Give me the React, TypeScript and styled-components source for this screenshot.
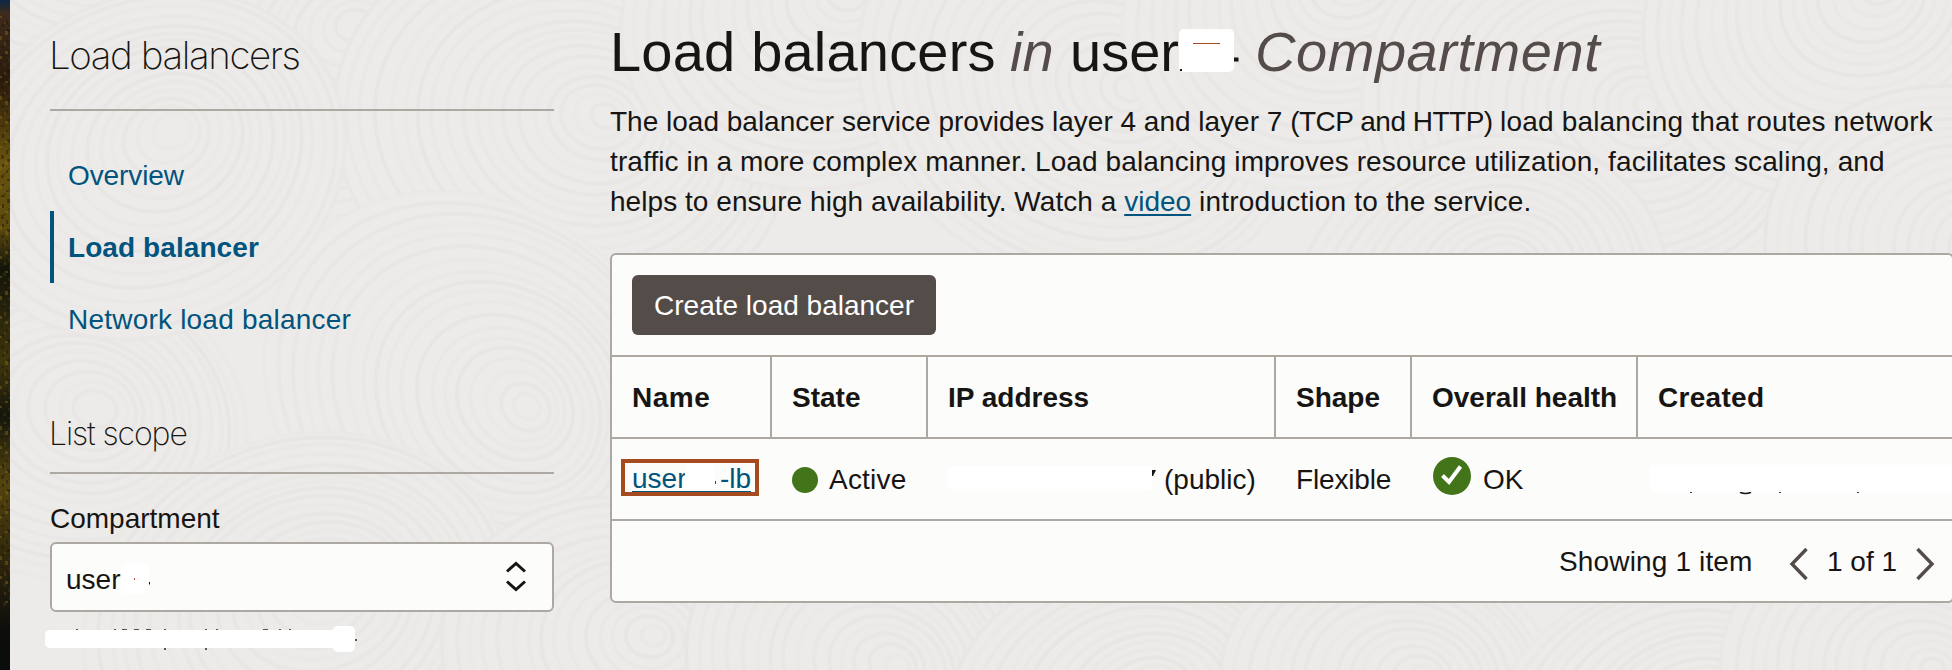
import React from "react";
import styled, { createGlobalStyle } from "styled-components";

const ink = "#161513";
const rule = "#aea8a2";
const link = "#00547d";
const paper = "#fcfcfa";
const brown = "#544c49";
const green = "#427519";

const GlobalStyle = createGlobalStyle`
  * { box-sizing: border-box; }
  html, body { margin: 0; background: #edebe9; overflow: hidden; }
  body {
    color: ${ink};
    font-family: "Liberation Sans", Arial, sans-serif;
    font-size: 28px;
    line-height: 40px;
  }
`;

const Page = styled.div`
  position: relative;
  display: flex;
  width: 1952px;
  height: 670px;
  overflow: hidden;
`;

const Texture = styled.svg`
  position: absolute;
  inset: 0;
`;

const Photo = styled.svg`
  position: relative;
  flex: none;
`;

const Sidebar = styled.aside`
  position: relative;
  flex: none;
  width: 600px;
  padding: 29px 56px 0 40px;
`;

const SideTitle = styled.h2<{ $size: number; $spacing: number; $gap: number }>`
  margin: 0;
  padding-bottom: ${(p) => p.$gap}px;
  border-bottom: 2px solid ${rule};
  font-family: Inter, "Liberation Sans", sans-serif;
  font-weight: 200;
  font-size: ${(p) => p.$size}px;
  line-height: 52px;
  letter-spacing: ${(p) => p.$spacing}px;
  text-indent: -1px;
`;

const Nav = styled.nav`
  display: flex;
  flex-direction: column;
  margin: 28px 0 53px;
`;

const NavItem = styled.a<{ $active?: boolean; $spacing: number }>`
  height: 72px;
  padding-left: 14px;
  border-left: 4px solid ${(p) => (p.$active ? link : "transparent")};
  color: ${link};
  font-weight: ${(p) => (p.$active ? 700 : 400)};
  letter-spacing: ${(p) => p.$spacing}px;
  line-height: 74px;
`;

const Label = styled.label`
  display: block;
  margin-top: 25px;
  line-height: 40px;
`;

const Select = styled.div`
  position: relative;
  display: flex;
  align-items: center;
  justify-content: space-between;
  height: 70px;
  margin-top: 3px;
  padding: 3px 25px 0 14px;
  border: 2px solid ${rule};
  border-radius: 6px;
  background: ${paper};
`;

const SelectValue = styled.span`
  padding-top: 2px;
`;

const SelectArrows = styled.svg`
  margin-bottom: 5px;
`;

const Mask = styled.span<{ $x: number; $y: number; $w: number; $h: number }>`
  position: absolute;
  left: ${(p) => p.$x}px;
  top: ${(p) => p.$y}px;
  width: ${(p) => p.$w}px;
  height: ${(p) => p.$h}px;
  border-radius: 5px;
  background: #fff;
`;

const Marks = styled.svg<{ $x: number; $y: number }>`
  position: absolute;
  left: ${(p) => p.$x}px;
  top: ${(p) => p.$y}px;
`;

const Hint = styled.div`
  position: relative;
  height: 40px;
`;

const Main = styled.main`
  position: relative;
  flex: none;
  width: 1344px;
  padding-top: 20px;
`;

const Heading = styled.h1`
  position: relative;
  display: flex;
  margin: 0;
  font-size: 56px;
  font-weight: 400;
  line-height: 64px;
  white-space: nowrap;

  em { color: ${brown}; }
`;

const Word = styled.span<{ $w: number; $spacing?: number }>`
  width: ${(p) => p.$w}px;
  letter-spacing: ${(p) => p.$spacing ?? 0}px;
`;

const Intro = styled.p`
  margin: 18px 0 31px;
  white-space: nowrap;
`;

const Line = styled.span`
  display: block;
`;

const Tracked = styled.span<{ $spacing: number }>`
  letter-spacing: ${(p) => p.$spacing}px;
`;

const Link = styled.a`
  color: ${link};
  text-decoration: underline;
  text-decoration-thickness: 2px;
  text-underline-offset: 3px;
`;

const Panel = styled.section`
  border: 2px solid ${rule};
  border-radius: 6px;
  background: ${paper};
`;

const Toolbar = styled.div`
  display: flex;
  padding: 20px;
  border-bottom: 2px solid ${rule};
`;

const Button = styled.button`
  width: 304px;
  height: 60px;
  padding: 2px 0 0;
  border: 0;
  border-radius: 6px;
  background: ${brown};
  color: #fff;
  font: inherit;
`;

const Row = styled.div`
  display: grid;
  grid-template-columns: 160px 156px 348px 136px 226px 1fr;
  height: 82px;
  border-bottom: 2px solid ${rule};
  white-space: nowrap;
`;

const HeadCell = styled.div<{ $spacing?: number }>`
  padding-left: 20px;
  border-right: 2px solid ${rule};
  font-weight: 700;
  letter-spacing: ${(p) => p.$spacing ?? 0}px;
  line-height: 82px;
  height: 80px;

  &:last-child { border-right: 0; }
`;

const Cell = styled.div`
  position: relative;
  display: flex;
  align-items: center;
  height: 80px;
  padding: 2px 0 0 20px;
`;

const Dot = styled.span`
  width: 26px;
  height: 26px;
  margin-right: 11px;
  border-radius: 50%;
  background: ${green};
`;

const NameLink = styled.a`
  display: flex;
  justify-content: space-between;
  width: 119px;
  height: 32px;
  margin-top: -6px;
  border-bottom: 2px solid ${link};
  color: ${link};
  line-height: 36px;
`;

const Highlight = styled.span`
  position: absolute;
  left: 9px;
  top: 20px;
  width: 138px;
  height: 37px;
  border: 4px solid #a64a20;
`;

const Health = styled.svg`
  margin: -8px 12px 0 1px;
`;

const Address = styled.span`
  margin-left: 216px;
`;

const Footer = styled.div`
  display: flex;
  align-items: center;
  justify-content: flex-end;
  height: 80px;
  padding-right: 17px;
`;

const Count = styled.span<{ $w: number; $spacing?: number }>`
  width: ${(p) => p.$w}px;
  padding-top: 2px;
  letter-spacing: ${(p) => p.$spacing ?? 0}px;
  white-space: nowrap;
`;

const Chevron = styled.svg<{ $gap: number }>`
  margin: 6px ${(p) => p.$gap}px 0 0;
`;

/* Wood-grain swirls: each disc hides the ones below it and carries its own drifting rings. */
const swirls: [number, number, number, number][] = [
  [60, -60, 190, 20], [330, 60, 210, -25], [560, 130, 230, 15], [820, 20, 200, -10],
  [1080, 90, 230, 30], [1330, 10, 210, -20], [1600, 120, 240, 15], [1850, 20, 210, -15],
  [1960, 260, 200, 20], [1480, 300, 190, -20], [60, 420, 190, 15], [480, 400, 230, 40],
  [300, 620, 220, -20], [620, 650, 180, 10], [860, 670, 180, 25], [1130, 720, 190, -15],
  [1390, 690, 170, 10], [1680, 740, 200, -20], [1900, 680, 180, 15], [150, 165, 200, -25],
];

function Grain() {
  return (
    <Texture width="1952" height="670" fill="#edebe9" stroke="#e8e6e4" strokeWidth="4">
      {swirls.map(([x, y, r, turn], i) => (
        <g key={i} transform={`translate(${x} ${y}) rotate(${turn})`}>
          <ellipse rx={r} ry={r * 0.84} stroke="none" />
          {Array.from({ length: Math.floor(r / 12) }, (_, n) => (
            <ellipse
              key={n}
              cx={n * 2.2 + Math.sin(n * 1.3 + i) * 2}
              cy={n * -1.4}
              rx={r - n * 12}
              ry={(r - n * 12) * (0.84 + Math.sin(n + i) * 0.015)}
              strokeOpacity={0.7 + 0.3 * Math.sin(n * 2 + i)}
            />
          ))}
        </g>
      ))}
    </Texture>
  );
}

const foliage = ["#8a6a14", "#171608", "#6b4a12", "#201a0a", "#3b3a0e"];

function Landscape() {
  return (
    <Photo width="10" height="670">
      <defs>
        <linearGradient id="slope" x1="0" y1="0" x2="0" y2="1">
          <stop offset="0" stopColor="#0c2746" />
          <stop offset="0.02" stopColor="#3d2a1c" />
          <stop offset="0.12" stopColor="#2c1b0c" />
          <stop offset="0.24" stopColor="#68530f" />
          <stop offset="0.34" stopColor="#5c4a0e" />
          <stop offset="0.4" stopColor="#13140a" />
          <stop offset="0.54" stopColor="#40360d" />
          <stop offset="0.62" stopColor="#15160b" />
          <stop offset="0.72" stopColor="#54440f" />
          <stop offset="0.88" stopColor="#211b0b" />
          <stop offset="0.94" stopColor="#0d0e0b" />
          <stop offset="1" stopColor="#0b0d0c" />
        </linearGradient>
      </defs>
      <rect width="10" height="670" fill="url(#slope)" />
      {Array.from({ length: 260 }, (_, i) => (
        <rect key={i} x={(i * 7) % 10} y={16 + ((i * 83) % 590)} width={2 + (i % 2)} height={2 + (i % 3)} fill={foliage[i % 5]} opacity="0.45" />
      ))}
    </Photo>
  );
}

export default function App() {
  return (
    <Page>
      <GlobalStyle />
      <Grain />
      <Landscape />
      <Sidebar>
        <SideTitle $size={38.5} $spacing={-1.42} $gap={28}>Load balancers</SideTitle>
        <Nav>
          <NavItem $spacing={-0.1}>Overview</NavItem>
          <NavItem $active $spacing={0.08}>Load balancer</NavItem>
          <NavItem $spacing={0.21}>Network load balancer</NavItem>
        </Nav>
        <SideTitle $size={32} $spacing={-1.1} $gap={12}>List scope</SideTitle>
        <Label>Compartment</Label>
        <Select>
          <SelectValue>user</SelectValue>
          <Mask $x={69} $y={20} $w={28} $h={30} />
          <Marks $x={80} $y={32} width="22" height="12">
            <rect x="2" y="2" width="1" height="2" fill="#c74634" />
            <rect x="17" y="6" width="1" height="2.5" fill={ink} />
          </Marks>
          <SelectArrows width="22" height="32" fill="none" stroke={ink} strokeWidth="3">
            <path d="M2 11.500 11 3.500 20 11.500M2 21.500 11 29.500 20 21.500" />
          </SelectArrows>
        </Select>
        <Hint>
          <Marks $x={0} $y={14} width="320" height="30" fill={ink}>
            <path opacity="0.7" d="M26 3h2v2h-2zM64 3h2v2h-2zM72 3h5v1h-5zM84 3h5v1h-5zM96 3h5v1h-5zM114 3h2v2h-2zM155 3h2v2h-2zM166 3h2v2h-2zM213 3h5v1h-5zM229 3h2v2h-2zM239 3h2v2h-2zM114 22h2v2h-2zM155 22h2v2h-2zM305 13h2v2h-2z" />
          </Marks>
          <Mask $x={-5} $y={18} $w={292} $h={18} />
          <Mask $x={283} $y={14} $w={22} $h={26} />
        </Hint>
      </Sidebar>
      <Main>
        <Heading>
          <Word $w={400} $spacing={0.2}>Load balancers</Word>
          <Word as="em" $w={60}>in</Word>
          <Word $w={185}>user</Word>
          <Word as="em" $w={360} $spacing={0.55}>Compartment</Word>
          <Mask $x={569} $y={9} $w={55} $h={43} />
          <Marks $x={570} $y={20} width="60" height="36">
            <rect x="13" y="3" width="27" height="1" fill="#a64a20" />
            <rect x="54" y="17.500" width="4.500" height="4" fill={ink} />
            <rect x="0" y="29" width="2" height="2" fill={ink} />
          </Marks>
        </Heading>
        <Intro>
          <Line>
            The load balancer service provides layer 4 and layer 7{" "}
            <Tracked $spacing={-0.5}>(TCP and HTTP) </Tracked>
            <Tracked $spacing={0.19}>load balancing that routes network</Tracked>
          </Line>
          <Line>
            <Tracked $spacing={0.11}>
              traffic in a more complex manner. Load balancing improves resource utilization, facilitates scaling, and
            </Tracked>
          </Line>
          <Line>
            <Tracked $spacing={0.05}>helps to ensure high availability. Watch a </Tracked>
            <Link>video</Link>
            <Tracked $spacing={0.2}> introduction to the service.</Tracked>
          </Line>
        </Intro>
        <Panel>
          <Toolbar><Button>Create load balancer</Button></Toolbar>
          <Row>
            <HeadCell $spacing={0.5}>Name</HeadCell>
            <HeadCell>State</HeadCell>
            <HeadCell>IP address</HeadCell>
            <HeadCell>Shape</HeadCell>
            <HeadCell>Overall health</HeadCell>
            <HeadCell $spacing={0.3}>Created</HeadCell>
          </Row>
          <Row>
            <Cell>
              <NameLink><span>user</span><span>-lb</span></NameLink>
              <Mask $x={73} $y={25} $w={30} $h={26} />
              <Marks $x={100} $y={38} width="6" height="8"><rect x="3" y="4" width="1" height="3" fill={link} /></Marks>
              <Highlight />
            </Cell>
            <Cell><Dot /><Tracked $spacing={0.2}>Active</Tracked></Cell>
            <Cell>
              <Mask $x={20} $y={27} $w={204} $h={25} />
              <Marks $x={222} $y={30} width="8" height="10"><path d="M2 1h4l-3 6h-1z" fill={ink} /></Marks>
              <Address>(public)</Address>
            </Cell>
            <Cell><Tracked $spacing={-0.15}>Flexible</Tracked></Cell>
            <Cell>
              <Health width="38" height="38">
                <circle cx="19" cy="19" r="19" fill={green} />
                <path d="M9.500 18.500 16 25 27.500 9.500" fill="none" stroke="#fff" strokeWidth="4" />
              </Health>
              OK
            </Cell>
            <Cell>
              <Mask $x={12} $y={26} $w={310} $h={27} />
              <Marks $x={50} $y={53} width="180" height="4" fill="none" stroke={ink} strokeWidth="1.6">
                <path d="M3 0v1M92 0v1M170 0v1M52 0.2q5.500 2.600 11 0" />
              </Marks>
            </Cell>
          </Row>
          <Footer>
            <Count $w={230} $spacing={0.15}>Showing 1 item</Count>
            <Chevron $gap={18} width="20" height="34" fill="none" stroke={brown} strokeWidth="3.4">
              <path d="M17.500 2 3 17 17.500 32" />
            </Chevron>
            <Count $w={88}>1 of 1</Count>
            <Chevron $gap={0} width="20" height="34" fill="none" stroke={brown} strokeWidth="3.4">
              <path d="M2.500 2 17 17 2.500 32" />
            </Chevron>
          </Footer>
        </Panel>
      </Main>
    </Page>
  );
}
